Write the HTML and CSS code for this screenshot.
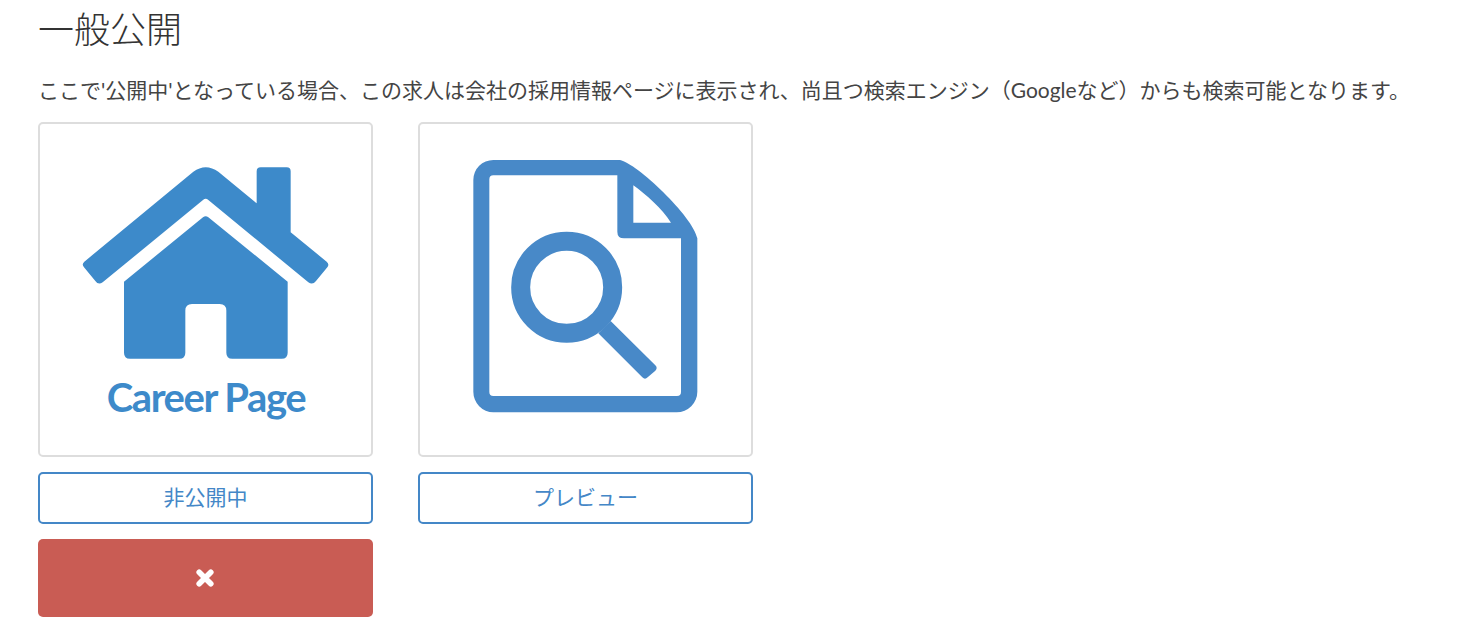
FILE: index.html
```html
<!DOCTYPE html>
<html lang="ja">
  <head>
    <meta charset="UTF-8" />
    <title>一般公開</title>
    <link rel="stylesheet" href="styles.css">
  </head>
  <body>
    <main>
      <h1>一般公開</h1>
      <p>ここで'公開中'となっている場合、この求人は会社の採用情報ページに表示され、尚且つ検索エンジン（Googleなど）からも検索可能となります。</p>

      <div class="channels">
        <div class="tile">
          <svg viewBox="30 12 993 993" aria-label="Career Page">
            <path class="house" d="M490,155 Q527,128 565,155 L680,250 V154 Q680,142 692,142 H770 Q782,142 782,154 V337 L890,425 Q899,433 892,442 L858,483 Q848,496 835,487 L535,240 Q527,232 519,240 L218,487 Q205,496 196,483 L162,442 Q154,433 163,425 Z" />
            <path class="house" d="M519,292 Q527,285 535,292 L773,485 V698 Q773,716 755,716 H607 Q589,716 589,698 V572 Q589,552 569,552 H486 Q466,552 466,572 V698 Q466,716 448,716 H300 Q282,716 282,698 V485 Z" />
            <text class="house" x="528" y="875">Career Page</text>
          </svg>
        </div>

        <div class="tile">
          <svg viewBox="30 12 993 993" aria-hidden="true">
            <path class="doc" fill-rule="evenodd" d="M250,120 H630 C680,130 850,290 862,355 V815 A62,62 0 0 1 800,877 H250 A60,62 0 0 1 190,815 V180 A60,60 0 0 1 250,120 Z M250,166 Q238,166 238,178 V816 Q238,828 250,828 H801 Q813,828 813,816 V355 H642 Q622,355 622,335 V166 Z M670,196 V308 H783 C755,265 710,225 670,196 Z" />
            <circle class="lens" cx="470" cy="502" r="138" />
            <path class="doc" d="M565,640 L697,772 Q705,780 713,772 L736,752 Q744,744 736,736 L602,603 Z" />
          </svg>
        </div>

        <button class="btn">非公開中</button>
        <button class="btn">プレビュー</button>

        <button class="btn is-danger" aria-label="削除">
          <svg viewBox="0 0 18 18" aria-hidden="true">
            <path d="M3.2,3.2 L14.8,14.8 M14.8,3.2 L3.2,14.8" />
          </svg>
        </button>
      </div>
    </main>
  </body>
</html>
```

FILE: styles.css
```css
*,
*::before,
*::after {
  box-sizing: border-box;
  margin: 0;
  padding: 0;
}

body {
  font-family: Lato, 'Noto Sans CJK JP', sans-serif;
  background: #fff;
  color: #444;
  overflow: hidden;
}

main {
  padding: 9px 0 0 38px;
}

h1 {
  font-size: 36px;
  font-weight: 300;
  line-height: 40px;
  color: #333;
}

p {
  font-size: 21px;
  line-height: 28px;
  margin-top: 27px;
  white-space: nowrap;
}

.channels {
  display: grid;
  grid-template-columns: repeat(2, 335px);
  gap: 15px 45px;
  margin-top: 18px;
}

.tile {
  height: 335px;
  border: 2px solid #ddd;
  border-radius: 5px;

  & svg {
    display: block;
    width: 100%;
    height: 100%;
  }
}

.house {
  fill: #3d8aca;
}

text.house {
  font-family: Lato, sans-serif;
  font-size: 120px;
  font-weight: 700;
  letter-spacing: -4.3px;
  text-anchor: middle;
}

.doc {
  fill: #4889c8;
}

.lens {
  fill: none;
  stroke: #4889c8;
  stroke-width: 57;
}

.btn {
  height: 52px;
  padding-bottom: 4px;
  border: 2px solid #4487c7;
  border-radius: 5px;
  background: #fff;
  color: #4487c7;
  font-family: inherit;
  font-size: 21px;

  &.is-danger {
    grid-column: 1;
    display: flex;
    align-items: center;
    justify-content: center;
    height: 78px;
    padding: 0 2px 0 0;
    border: 0;
    background: #c95c54;

    & svg {
      width: 18px;
      height: 18px;
      fill: none;
      stroke: #fff;
      stroke-width: 5.6;
      stroke-linecap: round;
    }
  }
}
```
